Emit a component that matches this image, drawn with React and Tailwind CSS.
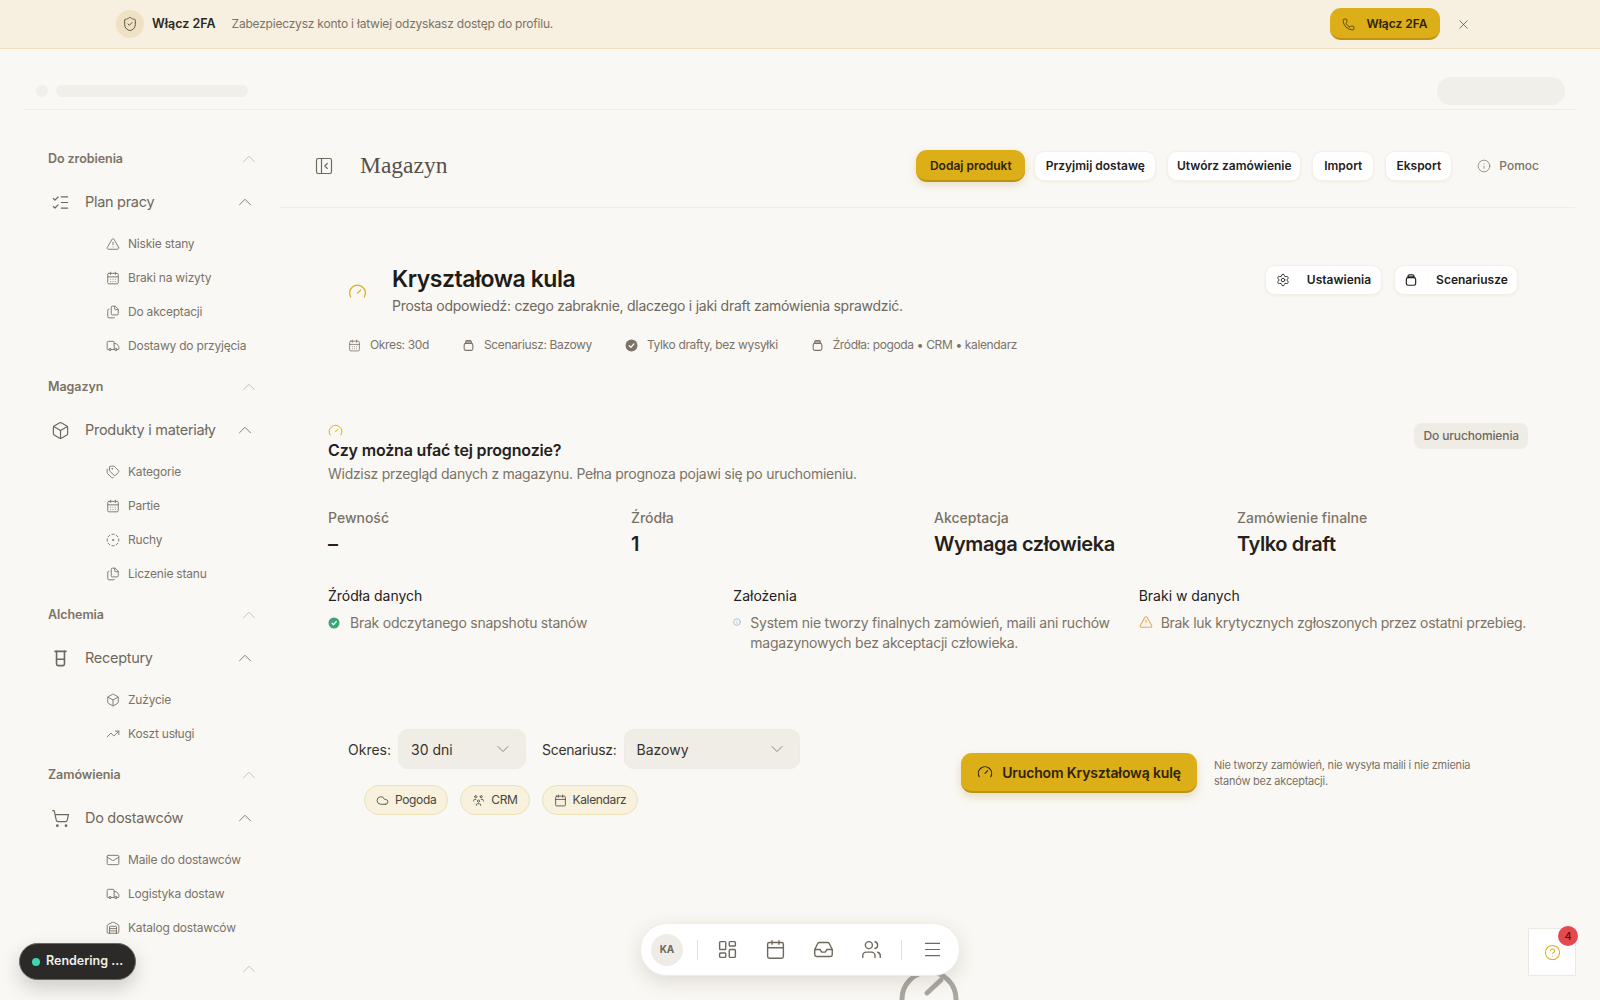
import {
  Box, Calendar, CalendarDays, ChevronDown, ChevronUp, CircleDotDashed, CircleHelp, Cloud, Files, Gauge,
  Info, LayoutDashboard, ListChecks, Mail, Menu, PanelLeftClose, Phone, Settings, ShieldCheck, ShoppingCart,
  Tags, TrendingUp, TriangleAlert, Truck, Users, Warehouse, X, Inbox,
} from "lucide-react";
import { TbUsersGroup } from "react-icons/tb";

const BeakerIcon = ({ className }) => (
  <svg viewBox="0 0 24 24" fill="none" stroke="currentColor" strokeWidth="2" strokeLinecap="round" className={className}>
    <path d="M5 3h14" />
    <path d="M7 3v16a2 2 0 0 0 2 2h6a2 2 0 0 0 2-2V3" />
    <path d="M7 13h10" />
  </svg>
);

const JarIcon = ({ className }) => (
  <svg viewBox="0 0 24 24" fill="none" stroke="currentColor" strokeWidth="2" strokeLinecap="round" strokeLinejoin="round" className={className}>
    <path d="M7 8V5a2 2 0 0 1 2-2h6a2 2 0 0 1 2 2v3" />
    <path d="M7 5.5h10" />
    <rect x="4" y="8" width="16" height="13" rx="3" />
  </svg>
);

const nav = [
  {
    title: "Do zrobienia",
    item: "Plan pracy",
    icon: ListChecks,
    subs: [
      ["Niskie stany", TriangleAlert],
      ["Braki na wizyty", CalendarDays],
      ["Do akceptacji", Files],
      ["Dostawy do przyjęcia", Truck],
    ],
  },
  {
    title: "Magazyn",
    item: "Produkty i materiały",
    icon: Box,
    subs: [
      ["Kategorie", Tags],
      ["Partie", CalendarDays],
      ["Ruchy", CircleDotDashed],
      ["Liczenie stanu", Files],
    ],
  },
  {
    title: "Alchemia",
    item: "Receptury",
    icon: BeakerIcon,
    subs: [
      ["Zużycie", Box],
      ["Koszt usługi", TrendingUp],
    ],
  },
  {
    title: "Zamówienia",
    item: "Do dostawców",
    icon: ShoppingCart,
    subs: [
      ["Maile do dostawców", Mail],
      ["Logistyka dostaw", Truck],
      ["Katalog dostawców", Warehouse],
    ],
  },
];

const Section = ({ title, item, icon: Icon, subs }) => (
  <div>
    <div className="h-[24px] flex items-center justify-between pl-[48px] pr-[20px]">
      <span className="text-[12.5px] font-semibold text-[#7b7367] tracking-[-0.005em]">{title}</span>
      <ChevronUp strokeWidth={0.8} className="w-[22px] h-[22px] text-[#b5b0a6]" />
    </div>
    <div className="h-[44px] mt-[9px] flex items-center pl-[51px] pr-[24px]">
      <Icon className="w-[19px] h-[19px] text-[#6f685d]" strokeWidth={1.5} />
      <span className="ml-[15px] flex-1 text-[14.5px] tracking-[-0.02em] text-[#6f685d]">{item}</span>
      <ChevronUp strokeWidth={1} className="w-[22px] h-[22px] text-[#7b7367]" />
    </div>
    <div className="mt-[3px] flex flex-col">
      {subs.map(([label, SubIcon]) => (
        <div key={label} className="h-[34px] flex items-center pl-[106px]">
          <SubIcon className="w-[14px] h-[14px] text-[#7b7367]" strokeWidth={1.6} />
          <span className="ml-[8px] text-[12px] tracking-[-0.017em] text-[#7b7367]">{label}</span>
        </div>
      ))}
    </div>
  </div>
);

const Sidebar = () => (
  <aside className="w-[280px] shrink-0 pt-[37px] flex flex-col gap-[12px]">
    {nav.map((s) => (
      <Section key={s.title} {...s} />
    ))}
    <div className="h-[24px] flex items-center justify-end pr-[20px]">
      <ChevronUp strokeWidth={0.8} className="w-[22px] h-[22px] text-[#b5b0a6]" />
    </div>
  </aside>
);

const WhiteBtn = ({ children, className }) => (
  <button className={"h-[30px] bg-white rounded-[10px] border border-[#f5f0e4] shadow-[0_1px_3px_rgba(120,100,60,0.08)] text-[12px] font-semibold text-[#24211c] flex items-center justify-center " + className}>
    {children}
  </button>
);

const Header = () => (
  <div className="h-[98px] border-b border-[#f0ede6] flex items-center pl-[34px] pr-[36px] mr-[25px] pt-[14px]">
    <PanelLeftClose strokeWidth={1.4} className="w-[20px] h-[20px] text-[#6f685d]" />
    <h1 className="ml-[26px] font-['Liberation_Serif',serif] text-[23.5px] text-[#55504a]">Magazyn</h1>
    <div className="ml-auto flex items-center gap-[11px]">
      <button className="h-[32px] w-[109px] -mr-[2px] pt-[2px] rounded-[11px] bg-[#dcae18] border-b-2 border-[#bd9411] shadow-[0_3px_8px_rgba(160,120,20,0.2)] text-[12px] font-semibold text-[#2e2408]">
        Dodaj produkt
      </button>
      <WhiteBtn className="w-[122px]">Przyjmij dostawę</WhiteBtn>
      <WhiteBtn className="w-[134px]">Utwórz zamówienie</WhiteBtn>
      <WhiteBtn className="w-[62px]">Import</WhiteBtn>
      <WhiteBtn className="w-[67px]">Eksport</WhiteBtn>
      <span className="ml-[14px] flex items-center gap-[8px] text-[12px] font-medium text-[#7b7367]">
        <Info strokeWidth={1.25} className="w-[14px] h-[14px]" />
        Pomoc
      </span>
    </div>
  </div>
);

const Meta = ({ icon: Icon, children }) => (
  <span className="flex items-center text-[12px] tracking-[-0.03em] text-[#7b7367]">
    <Icon strokeWidth={1.5} className="w-[13px] h-[13px]" />
    <span className="ml-[9px]">{children}</span>
  </span>
);

const CheckDot = ({ className }) => (
  <svg viewBox="0 0 24 24" className={className}>
    <circle cx="12" cy="12" r="11" fill="currentColor" />
    <path d="m8 12.5 3 3 5.5-6.5" fill="none" stroke="#fff" strokeWidth="2.4" strokeLinecap="round" strokeLinejoin="round" />
  </svg>
);

const Hero = () => (
  <div className="pl-[68px] pr-[82px] pt-[55px]">
    <div className="flex items-start">
      <Gauge strokeWidth={1.6} className="w-[19px] h-[19px] mt-[19px] text-[#dcae18]" />
      <div className="ml-[25px]">
        <h2 className="text-[23px] leading-[32px] font-semibold text-[#1f1c17] tracking-[-0.02em]">Kryształowa kula</h2>
        <p className="text-[14px] leading-[20px] mt-[1px] tracking-[-0.019em] text-[#6f685d]">
          Prosta odpowiedź: czego zabraknie, dlaczego i jaki draft zamówienia sprawdzić.
        </p>
      </div>
      <div className="ml-auto flex gap-[12px] mt-[2px]">
        <WhiteBtn className="w-[117px] gap-[17px]">
          <Settings strokeWidth={1.5} className="w-[14px] h-[14px]" />
          Ustawienia
        </WhiteBtn>
        <WhiteBtn className="w-[124px] gap-[18px]">
          <JarIcon className="w-[14px] h-[14px]" />
          Scenariusze
        </WhiteBtn>
      </div>
    </div>
    <div className="flex gap-[33px] mt-[19px] h-[20px] items-center">
      <Meta icon={CalendarDays}>Okres: 30d</Meta>
      <Meta icon={JarIcon}>Scenariusz: Bazowy</Meta>
      <Meta icon={CheckDot}>Tylko drafty, bez wysyłki</Meta>
      <Meta icon={JarIcon}>Źródła: pogoda • CRM • kalendarz</Meta>
    </div>
  </div>
);

const stats = [
  ["Pewność", "–"],
  ["Źródła", "1"],
  ["Akceptacja", "Wymaga człowieka"],
  ["Zamówienie finalne", "Tylko draft"],
];

const Trust = () => (
  <div className="pl-[48px] pr-[72px] mt-[68px]">
    <div className="flex justify-between items-start">
      <div>
        <Gauge strokeWidth={1.6} className="w-[15px] h-[15px] text-[#dcae18]" />
        <h3 className="text-[16px] leading-[22px] mt-[1px] tracking-[-0.01em] font-semibold text-[#24211c]">Czy można ufać tej prognozie?</h3>
        <p className="text-[14px] leading-[20px] mt-[3px] tracking-[-0.02em] text-[#7b7367]">
          Widzisz przegląd danych z magazynu. Pełna prognoza pojawi się po uruchomieniu.
        </p>
      </div>
      <span className="h-[26px] px-[9px] flex items-center rounded-[8px] bg-[#efece5] text-[12px] tracking-[-0.01em] font-medium text-[#6f685d]">Do uruchomienia</span>
    </div>
    <div className="grid grid-cols-4 gap-x-[12px] mt-[24px]">
      {stats.map(([label, value]) => (
        <div key={label}>
          <div className="text-[14px] leading-[20px] font-medium text-[#7b7367]">{label}</div>
          <div className="text-[20px] leading-[30px] mt-[1px] tracking-[-0.02em] font-semibold text-[#24211c]">{value}</div>
        </div>
      ))}
    </div>
    <div className="grid grid-cols-3 gap-x-[16px] mt-[27px]">
      <div>
        <div className="text-[14px] leading-[20px] text-[#24211c]">Źródła danych</div>
        <div className="flex mt-[7px]">
          <CheckDot className="w-[12px] h-[12px] mt-[4px] mr-[10px] shrink-0 text-[#3aa676]" />
          <p className="text-[14px] leading-[20px] tracking-[-0.017em] text-[#7b7367]">Brak odczytanego snapshotu stanów</p>
        </div>
      </div>
      <div>
        <div className="text-[14px] leading-[20px] text-[#24211c]">Założenia</div>
        <div className="flex mt-[7px]">
          <Info strokeWidth={2} className="w-[8px] h-[8px] mt-[5px] mr-[9px] shrink-0 text-[#8fa8e0]" />
          <p className="text-[14px] leading-[20px] tracking-[-0.017em] text-[#7b7367]">
            System nie tworzy finalnych zamówień, maili ani ruchów magazynowych bez akceptacji człowieka.
          </p>
        </div>
      </div>
      <div>
        <div className="text-[14px] leading-[20px] text-[#24211c]">Braki w danych</div>
        <div className="flex mt-[7px]">
          <TriangleAlert strokeWidth={1.75} className="w-[14px] h-[14px] mt-[2px] mr-[8px] shrink-0 text-[#e3a94f]" />
          <p className="text-[14px] leading-[20px] tracking-[-0.02em] whitespace-nowrap text-[#7b7367]">Brak luk krytycznych zgłoszonych przez ostatni przebieg.</p>
        </div>
      </div>
    </div>
  </div>
);

const Select = ({ value, width }) => (
  <div className={"h-[40px] rounded-[10px] bg-[#f0ede7] border border-[#eeebe4] flex items-center justify-between pl-[12px] pr-[12px] text-[14px] text-[#37332b] " + width}>
    {value}
    <ChevronDown strokeWidth={1} className="w-[20px] h-[20px] text-[#7b7367]" />
  </div>
);

const Chip = ({ icon: Icon, children }) => (
  <span className="h-[30px] px-[11px] rounded-full bg-[#f7f1de] border border-[#ebe2b5] flex items-center gap-[6px] text-[12px] tracking-[-0.03em] text-[#4a453d]">
    <Icon strokeWidth={1.5} className="w-[13px] h-[13px]" />
    {children}
  </span>
);

const Controls = () => (
  <div className="pl-[68px] mt-[76px] flex items-start">
    <div className="w-[613px]">
      <div className="flex items-center text-[14px] text-[#37332b]">
        <span>Okres:</span>
        <span className="ml-[7px]"><Select value="30 dni" width="w-[128px]" /></span>
        <span className="ml-[16px] tracking-[-0.02em]">Scenariusz:</span>
        <span className="ml-[7px]"><Select value="Bazowy" width="w-[176px]" /></span>
      </div>
      <div className="flex gap-[12px] mt-[16px] ml-[16px]">
        <Chip icon={Cloud}>Pogoda</Chip>
        <Chip icon={TbUsersGroup}>CRM</Chip>
        <Chip icon={Calendar}>Kalendarz</Chip>
      </div>
    </div>
    <button className="mt-[24px] h-[40px] w-[236px] rounded-[11px] bg-[#dcae18] border-b-2 border-[#bd9411] shadow-[0_4px_10px_rgba(160,120,20,0.22)] flex items-center justify-center gap-[9px] text-[14px] tracking-[-0.01em] font-semibold text-[#2e2408]">
      <Gauge strokeWidth={1.6} className="w-[16px] h-[16px]" />
      Uruchom Kryształową kulę
    </button>
    <p className="mt-[28px] ml-[17px] w-[270px] text-[11px] leading-[16px] tracking-[-0.02em] text-[#7b7367]">
      Nie tworzy zamówień, nie wysyła maili i nie zmienia stanów bez akceptacji.
    </p>
  </div>
);

export default function App() {
  return (
    <div className="relative h-[1000px] overflow-hidden bg-[#faf8f4] font-['Inter',sans-serif]">
      <div className="h-[49px] bg-[#f7efdf] border-b border-[#f2dfbd] flex items-center pl-[116px]">
        <span className="w-[28px] h-[28px] rounded-full bg-[#efe2c4] flex items-center justify-center">
          <ShieldCheck strokeWidth={1.5} className="w-[16px] h-[16px] text-[#5d5546]" />
        </span>
        <span className="ml-[8px] text-[12.5px] font-semibold text-[#2c281f]">Włącz 2FA</span>
        <span className="ml-[16px] text-[12px] tracking-[-0.0175em] text-[#7b7367]">Zabezpieczysz konto i łatwiej odzyskasz dostęp do profilu.</span>
        <button className="ml-auto h-[32px] w-[110px] pt-[2px] rounded-[11px] bg-[#dcae18] border-b-2 border-[#bd9411] flex items-center justify-center gap-[11px] text-[12px] font-semibold text-[#2e2408]">
          <Phone strokeWidth={1.25} className="w-[13px] h-[13px]" />
          Włącz 2FA
        </button>
        <X strokeWidth={1} className="ml-[16px] mr-[129px] w-[15px] h-[15px] text-[#37332b]" />
      </div>

      <div className="h-[61px] mx-[24px] pt-[24px] border-b border-[#f0ede6] flex items-center justify-between pl-[12px] pr-[11px]">
        <div className="flex items-center gap-[8px]">
          <span className="w-[12px] h-[12px] rounded-full bg-[#f1efe9]" />
          <span className="w-[192px] h-[12px] rounded-full bg-[#f1efe9]" />
        </div>
        <span className="w-[128px] h-[28px] rounded-[14px] bg-[#f1efe9]" />
      </div>

      <div className="flex">
        <Sidebar />
        <main className="flex-1 min-w-0">
          <Header />
          <Hero />
          <Trust />
          <Controls />
        </main>
      </div>

      {/* overlays */}
      <svg viewBox="0 0 70 70" fill="none" stroke="#a9a79f" strokeWidth="5" strokeLinecap="round" className="absolute left-[894px] top-[964px] w-[70px] h-[70px]">
        <circle cx="35" cy="35" r="27" />
        <path d="M33 29 47 16" />
      </svg>
      <div className="absolute left-[640px] top-[923px] w-[320px] h-[53px] rounded-full bg-white shadow-[0_6px_20px_rgba(60,50,30,0.14)] border border-[#efece5] flex items-center pl-[10px]">
        <span className="w-[32px] h-[32px] rounded-full bg-[#efece7] flex items-center justify-center text-[10px] font-bold text-[#6f685d]">KA</span>
        <span className="ml-[14px] w-px h-[20px] bg-[#e3dfd7]" />
        <LayoutDashboard strokeWidth={1.6} className="ml-[19px] w-[21px] h-[21px] text-[#6f685d]" />
        <Calendar strokeWidth={1.6} className="ml-[27px] w-[21px] h-[21px] text-[#6f685d]" />
        <Inbox strokeWidth={1.6} className="ml-[27px] w-[21px] h-[21px] text-[#6f685d]" />
        <Users strokeWidth={1.6} className="ml-[27px] w-[21px] h-[21px] text-[#6f685d]" />
        <span className="ml-[19px] w-px h-[20px] bg-[#e3dfd7]" />
        <Menu strokeWidth={1.25} className="ml-[20px] w-[21px] h-[21px] text-[#6f685d]" />
      </div>
      <div className="absolute left-[19px] top-[943px] h-[37px] w-[117px] rounded-full bg-[#2b2a28] border border-[#6a6862] shadow-[0_8px_20px_rgba(0,0,0,0.18)] flex items-center pl-[12px] gap-[6px] text-[12.5px] font-semibold text-[#f1f0ec]">
        <span className="w-[8px] h-[8px] rounded-full bg-[#3ed6ae]" />
        Rendering …
      </div>
      <div className="absolute left-[1528px] top-[928px] w-[48px] h-[48px] bg-white border border-[#ece9e2] flex items-center justify-center">
        <CircleHelp strokeWidth={1.5} className="w-[17px] h-[17px] text-[#dcae18]" />
        <span className="absolute -right-[3px] -top-[3px] w-[20px] h-[20px] rounded-full bg-[#e5484d] flex items-center justify-center text-[11px] font-medium text-[#5c1014]">4</span>
      </div>
    </div>
  );
}
